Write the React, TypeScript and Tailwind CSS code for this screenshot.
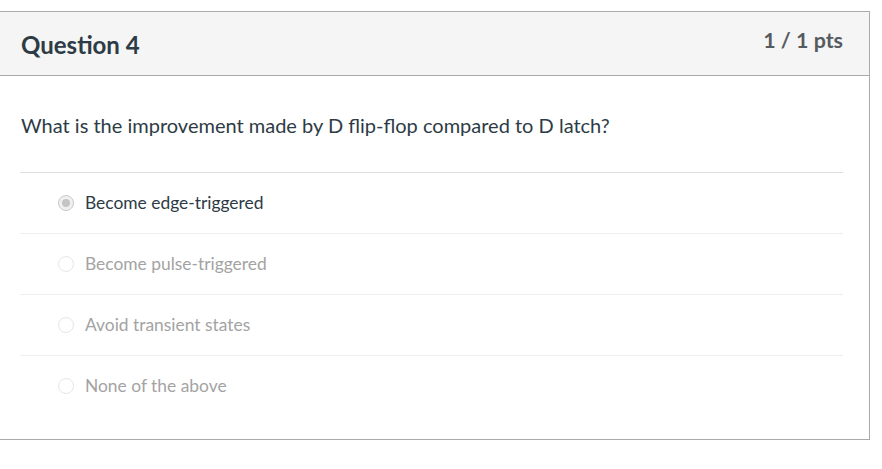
import React from "react";

const answers = [
  { text: "Become edge-triggered", selected: true },
  { text: "Become pulse-triggered", selected: false },
  { text: "Avoid transient states", selected: false },
  { text: "None of the above", selected: false },
];

const Radio = ({ selected }: { selected: boolean }) =>
  selected ? (
    <span className="flex h-4 w-4 shrink-0 items-center justify-center rounded-full border border-[#c8c8c8] bg-[#f0f0f0]">
      <span className="h-[8px] w-[8px] rounded-full bg-[#c4c4c4]" />
    </span>
  ) : (
    <span className="h-4 w-4 shrink-0 rounded-full border border-[#e6e6e6] bg-white" />
  );

export default function App() {
  return (
    <div className="min-h-[469px] bg-white pt-[11px] font-['Lato','Liberation_Sans',sans-serif]">
      <div className="w-[870px] border-t border-r border-b border-[#aaaaaa]">
        <div className="flex h-[64px] items-start justify-between border-b border-[#aaaaaa] bg-[#f5f5f5] pl-[21px] pr-[26px]">
          <h2 className="mt-[18px] text-[24px] font-bold leading-[30px] text-[#2d3b45]">Question 4</h2>
          <div className="mt-[14px] text-[21.4px] font-bold leading-[28px] text-[#555b60]">1 / 1 pts</div>
        </div>
        <div className="px-[20px] pb-[23px]">
          <p className="mt-[34px] mb-[32px] pl-[1px] text-[20px] leading-[30px] text-[#2d3b45]">
            What is the improvement made by D flip-flop compared to D latch?
          </p>
          <div className="w-[823px]">
            {answers.map((a, i) => (
              <div
                key={i}
                className={
                  "flex h-[61px] items-center gap-[11px] border-t pl-[38px] " +
                  (i === 0 ? "border-[#dddddd]" : "border-[#eeeeee]")
                }
              >
                <Radio selected={a.selected} />
                <span className={"text-[17.4px] leading-[24px] " + (a.selected ? "text-[#2d3b45]" : "text-[#a3a3a3]")}>
                  {a.text}
                </span>
              </div>
            ))}
          </div>
        </div>
      </div>
    </div>
  );
}
